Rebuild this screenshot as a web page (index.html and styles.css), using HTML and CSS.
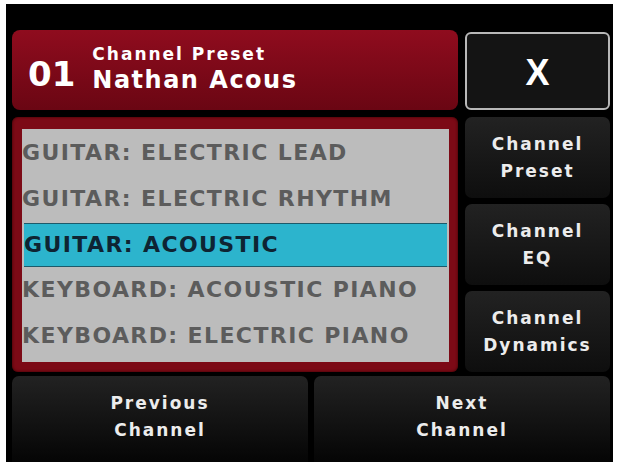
FILE: index.html
```html
<!DOCTYPE html>
<html lang="en">
<head>
  <meta charset="UTF-8" />
  <meta name="viewport" content="width=device-width, initial-scale=1.0"/>
  <title>Channel Preset</title>
  <link rel="stylesheet" href="styles.css">
</head>
<body>

<div class="screen">

  <div class="header">
    <span class="chan-num">01</span>
    <div class="chan-info">
      <span class="chan-label">Channel Preset</span>
      <span class="chan-name">Nathan Acous</span>
    </div>
  </div>

  <button class="btn close">X</button>

  <div class="list-frame">
    <ul class="preset-list">
      <li>GUITAR: ELECTRIC LEAD</li>
      <li>GUITAR: ELECTRIC RHYTHM</li>
      <li class="selected">GUITAR: ACOUSTIC</li>
      <li>KEYBOARD: ACOUSTIC PIANO</li>
      <li>KEYBOARD: ELECTRIC PIANO</li>
    </ul>
  </div>

  <div class="side">
    <button class="btn">Channel<br>Preset</button>
    <button class="btn">Channel<br>EQ</button>
    <button class="btn">Channel<br>Dynamics</button>
  </div>

  <div class="bottom">
    <button class="btn">Previous<br>Channel</button>
    <button class="btn">Next<br>Channel</button>
  </div>

</div>

</body>
</html>
```

FILE: styles.css
```css
:root {
  --bg: #000;
  --red: #7c0a16;
  --list: #bcbcbc;
  --list-text: #5c5c5c;
  --pick: #2cb4cd;
  --pick-text: #0e2433;
  --btn-text: #ececec;
}
* {
  box-sizing: border-box;
}
html, body {
  height: 100%;
}
body {
  margin: 0;
  background: #fff;
  font-family: "DejaVu Sans", Verdana, sans-serif;
}
.screen {
  height: 100%;
  margin: 0 4px 0 6px;
  padding: 26px 3px 0 6px;
  border-top: 4px solid #fff;
  background: var(--bg);
  display: grid;
  grid-template-columns: 446px 145px;
  grid-template-rows: 80px 255px 1fr;
  column-gap: 7px;
  row-gap: 7px;
}

/* top bar */
.header {
  background: linear-gradient(#8f0c1e, #6a0613);
  border-radius: 8px;
  display: flex;
  align-items: center;
  padding: 0 0 0 16px;
  color: #fff;
}
.chan-num {
  font-size: 34px;
  font-weight: bold;
  margin-right: 17px;
  margin-top: 8px;
}
.chan-info {
  display: flex;
  flex-direction: column;
  letter-spacing: 1px;
}
.chan-label {
  font-size: 17px;
  font-weight: bold;
  line-height: 20px;
  letter-spacing: 2px;
}
.chan-name {
  font-size: 24px;
  font-weight: bold;
  line-height: 32px;
  letter-spacing: 1.5px;
}

/* buttons */
.btn {
  font-family: inherit;
  background: linear-gradient(#222, #0e0e0e);
  color: var(--btn-text);
  border: none;
  border-radius: 7px;
  font-size: 17px;
  font-weight: bold;
  letter-spacing: 2px;
  line-height: 27px;
  padding: 0;
}
.close {
  margin-top: 2px;
  background: #141414;
  border: 2px solid #b8b8b8;
  border-radius: 6px;
  font-family: "Liberation Sans", Arial, sans-serif;
  font-size: 36px;
  color: #fff;
  letter-spacing: 0;
  padding-top: 2px;
}

/* preset list */
.list-frame {
  background: var(--red);
  border-radius: 6px;
  padding: 12px 9px 10px 10px;
  box-shadow: inset 0 0 3px #300;
}
.preset-list {
  list-style: none;
  margin: 0;
  padding: 1px 0 0;
  height: 100%;
  background: var(--list);
  overflow: hidden;
}
.preset-list li {
  height: 46px;
  line-height: 46px;
  font-size: 22px;
  font-weight: bold;
  color: var(--list-text);
  letter-spacing: 1.4px;
  white-space: nowrap;
}
.preset-list li.selected {
  background: var(--pick);
  color: var(--pick-text);
  border-top: 1px solid #1d5a6a;
  border-bottom: 1px solid #1d5a6a;
  line-height: 42px;
  margin: 1px 2px 0 2px;
  height: 44px;
}

.side {
  display: flex;
  flex-direction: column;
  gap: 6px;
}
.side .btn {
  flex: 1;
}

.bottom {
  grid-column: 1 / 3;
  margin-top: -3px;
  display: flex;
  gap: 6px;
}
.bottom .btn {
  flex: 1;
  border-radius: 7px 7px 0 0;
  background: linear-gradient(#222, #050505);
  padding-bottom: 4px;
}
```
